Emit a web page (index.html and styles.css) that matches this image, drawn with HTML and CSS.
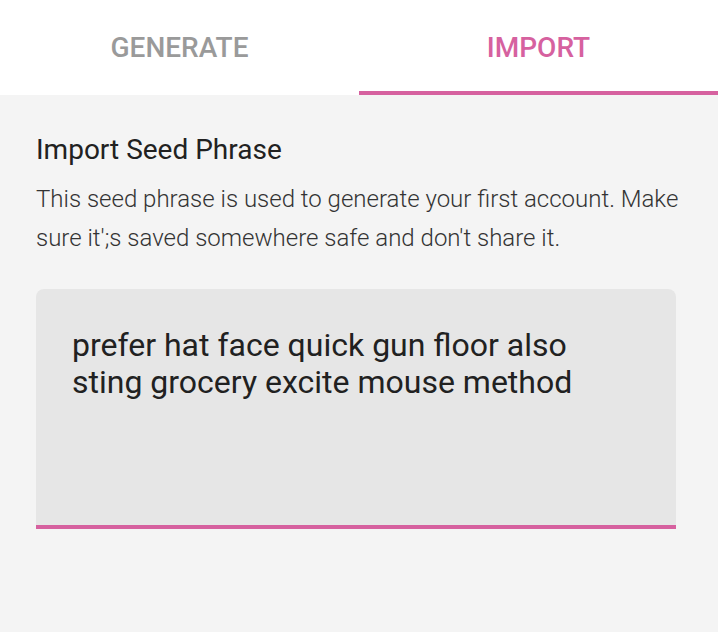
FILE: index.html
```html
<!DOCTYPE html>
<html>
<head>
<meta charset="utf-8">
<link rel="stylesheet" href="styles.css">
</head>
<body>
<div class="tabs">
  <div class="tab">GENERATE</div>
  <div class="tab active">IMPORT</div>
</div>
<main class="content">
  <h1 class="title">Import Seed Phrase</h1>
  <p class="desc">This seed phrase is used to generate your first account. Make sure it';s saved somewhere safe and don't share it.</p>
  <div class="field">
    <div class="field-text">prefer hat face quick gun floor also sting grocery excite mouse method</div>
  </div>
</main>
</body>
</html>
```
FILE: styles.css
```css
html, body {
  margin: 0;
  padding: 0;
}
body {
  width: 718px;
  height: 632px;
  background: #f4f4f4;
  font-family: Roboto, "Noto Sans", sans-serif;
  overflow: hidden;
}
.tabs {
  display: flex;
  background: #ffffff;
  height: 95px;
}
.tab {
  flex: 1;
  display: flex;
  align-items: center;
  justify-content: center;
  font-size: 28px;
  font-weight: 500;
  color: #9a9a9a;
  box-sizing: border-box;
  padding-top: 3px;
  border-bottom: 4px solid transparent;
}
.tab.active {
  color: #d6619f;
  border-bottom-color: #d6619f;
}
.content {
  padding: 37px 20px 0 36px;
}
.title {
  margin: 0;
  font-size: 28px;
  line-height: 36px;
  font-weight: 400;
  color: #212121;
}
.desc {
  margin: 12px 0 0 0;
  font-size: 24px;
  line-height: 39px;
  font-weight: 300;
  color: #333333;
}
.field {
  margin-top: 31px;
  width: 640px;
  height: 240px;
  box-sizing: border-box;
  background: #e6e6e6;
  border-radius: 8px 8px 0 0;
  border-bottom: 4px solid #d6619f;
  padding: 38px 36px 0 36px;
}
.field-text {
  font-size: 32px;
  line-height: 37px;
  font-weight: 400;
  color: #212121;
}
```
